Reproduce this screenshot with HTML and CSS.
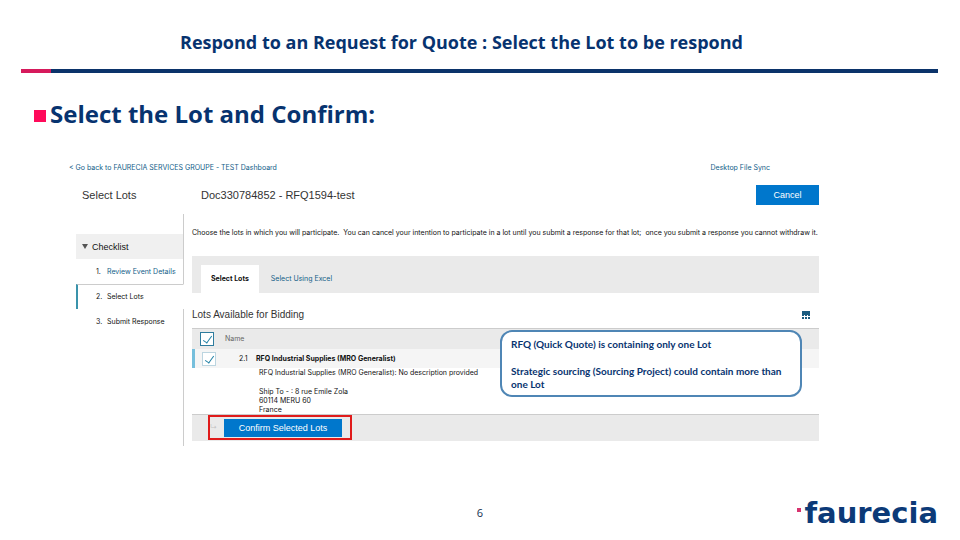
FILE: index.html
```html
<!DOCTYPE html>
<html lang="en">

<head>
  <meta charset="UTF-8">
  <meta name="viewport" content="width=device-width, initial-scale=1.0">
  <title>Respond to an Request for Quote</title>
  <link rel="stylesheet" href="styles.css">
</head>

<body>
  <header class="slide-header">
    <h1>Respond to an Request for Quote : Select the Lot to be respond</h1>
  </header>

  <main>
    <h2>Select the Lot and Confirm:</h2>

    <div class="app">
      <nav class="topbar">
        <a href="#">&lt; Go back to FAURECIA SERVICES GROUPE - TEST Dashboard</a>
        <a href="#">Desktop File Sync</a>
      </nav>

      <div class="titlebar">
        <span class="page-name">Select Lots</span>
        <span class="doc-name">Doc330784852 - RFQ1594-test</span>
        <button class="btn cancel">Cancel</button>
      </div>

      <div class="columns">
        <aside>
          <div class="side-top"></div>
          <h3 class="checklist"><span class="caret"></span>Checklist</h3>
          <ol class="steps">
            <li><span>1.</span><a href="#">Review Event Details</a></li>
            <li class="current"><span>2.</span>Select Lots</li>
            <li><span>3.</span>Submit Response</li>
          </ol>
          <div class="side-rest"></div>
        </aside>

        <section class="content">
          <p class="intro">Choose the lots in which you will participate.&nbsp; You can cancel your intention to participate in a lot until you submit a response for that lot;&nbsp; once you submit a response you cannot withdraw it.</p>

          <div class="tabs">
            <a class="active" href="#">Select Lots</a>
            <a href="#">Select Using Excel</a>
          </div>

          <div class="lots-head">
            <h3>Lots Available for Bidding</h3>
            <button class="grid-btn" aria-label="Table options">
              <svg width="8" height="8" viewBox="0 0 8 8" shape-rendering="crispEdges">
                <path fill="#1a5b80" d="M0 0h8v4h-8zM0 4h2v1h-2zM3 4h2v1h-2zM6 4h2v1h-2zM0 6h2v2h-2zM3 6h2v2h-2zM6 6h2v2h-2z" />
              </svg>
            </button>
          </div>

          <div class="lots">
            <table>
              <thead>
                <tr>
                  <th class="check"><input type="checkbox" aria-label="Select all lots" checked></th>
                  <th class="name">Name</th>
                </tr>
              </thead>
              <tbody>
                <tr class="lot">
                  <td class="check"><input type="checkbox" id="lot1" checked></td>
                  <td><label for="lot1"><span class="num">2.1</span><b>RFQ Industrial Supplies (MRO Generalist)</b></label></td>
                </tr>
                <tr class="desc">
                  <td></td>
                  <td>
                    <p>RFQ Industrial Supplies (MRO Generalist): No description provided</p>
                    <p>Ship To - : 8 rue Emile Zola<br>60114 MERU 60<br>France</p>
                  </td>
                </tr>
              </tbody>
            </table>
            <div class="actions">
              <div class="highlight">
                <span class="arrow">↳</span>
                <button class="btn">Confirm Selected Lots</button>
              </div>
            </div>
            <div class="callout">
              <p>RFQ (Quick Quote) is containing only one Lot</p>
              <p>Strategic sourcing (Sourcing Project) could contain more than one Lot</p>
            </div>
          </div>
        </section>
      </div>
    </div>
  </main>

  <footer>
    <span class="page-number">6</span>
    <div class="logo"><i></i>faurecia</div>
  </footer>
</body>

</html>
```
FILE: styles.css
```css
* {
  box-sizing: border-box;
}

body {
  display: flex;
  flex-direction: column;
  min-height: 100vh;
  margin: 0;
  background: #fff;
  color: #111;
  font-family: Inter, "Liberation Sans", sans-serif;
  font-size: 7px;
  line-height: 10px;
}

h1,
h2,
h3,
p,
ol {
  margin: 0;
  padding: 0;
}

a {
  color: #125d88;
  text-decoration: none;
}

/* slide */
.slide-header {
  margin: 0 22px 0 21px;
  padding-top: 29px;
}

.slide-header::after {
  content: "";
  display: block;
  height: 4px;
  margin-top: 14px;
  background: linear-gradient(to right, #d61a5c 30px, #0b336a 30px);
}

h1 {
  padding-right: 36px;
  color: #07336f;
  font: bold 18px/26px "Open Sans", "Noto Sans", sans-serif;
  text-align: center;
}

h2 {
  display: flex;
  align-items: center;
  gap: 4px;
  margin: 24px 0 0 34px;
  color: #07336f;
  font: bold 24px/34px "Open Sans", "Noto Sans", sans-serif;
}

h2::before {
  content: "";
  width: 12px;
  height: 12px;
  margin-top: 4px;
  background: #ff0a5a;
}

/* application */
.app {
  margin: 32px 141px 0 69px;
}

.topbar {
  display: flex;
  justify-content: space-between;
  padding-right: 49px;
}

.titlebar {
  display: flex;
  align-items: center;
  height: 20px;
  margin-top: 12px;
  padding-left: 13px;
  color: #333;
  font-family: "Liberation Sans", Arial, sans-serif;
  font-size: 11px;
}

.page-name {
  width: 119px;
}

.doc-name {
  flex: 1;
}

.btn {
  border: none;
  padding: 0;
  height: 18px;
  background: #0077cc;
  color: #fff;
  font: 9px/18px "Liberation Sans", Arial, sans-serif;
  cursor: pointer;
}

.cancel {
  width: 63px;
  height: 20px;
}

.columns {
  display: grid;
  grid-template-columns: 108px minmax(0, 1fr);
  gap: 8px;
  margin: 9px 0 0 7px;
}

aside {
  display: flex;
  flex-direction: column;
}

.side-top,
.checklist,
.side-rest,
.steps li {
  border-right: 1px solid #ccc;
}

.side-top {
  height: 20px;
}

.side-rest {
  flex: 1;
}

.checklist {
  display: flex;
  align-items: center;
  gap: 4px;
  height: 25px;
  padding-left: 6px;
  background: #f0f0f0;
  font-family: "Liberation Sans", Arial, sans-serif;
  font-size: 9px;
  font-weight: normal;
}

.caret {
  border: 3px solid transparent;
  border-top: 5px solid #555;
  border-bottom: none;
}

.steps {
  list-style: none;
}

.steps li {
  display: flex;
  align-items: center;
  height: 25px;
  padding-left: 20px;
}

.steps li span {
  width: 11px;
}

.steps .current {
  border-top: 1px solid #ccc;
  border-right-color: transparent;
  border-left: 2px solid #3a93ab;
  padding-left: 18px;
}

.content {
  padding-bottom: 5px;
}

.intro {
  padding-top: 14px;
  white-space: nowrap;
}

.tabs {
  display: flex;
  height: 37px;
  margin-top: 18px;
  padding: 9px 9px 0;
  background: #eaeaea;
  line-height: 27px;
}

.tabs a {
  padding: 0 12px;
}

.tabs .active {
  padding: 0 10px;
  background: #fff;
  color: #111;
  font-weight: bold;
}

.lots-head {
  display: flex;
  justify-content: space-between;
  align-items: center;
  height: 35px;
  padding: 8px 9px 0 0;
}

.lots-head h3 {
  color: #333;
  font-family: "Liberation Sans", Arial, sans-serif;
  font-size: 10px;
  font-weight: normal;
}

.grid-btn {
  display: flex;
  border: none;
  padding: 0;
  background: none;
  cursor: pointer;
}

.lots {
  position: relative;
}

table {
  width: 100%;
  border-spacing: 0;
  table-layout: fixed;
  text-align: left;
}

th,
td {
  padding: 0;
}

th {
  height: 21px;
  border-top: 1px solid #ccc;
  background: #eaeaea;
  color: #666;
  font-weight: normal;
}

th.check,
td.check {
  width: 33px;
  padding-left: 8px;
}

.lot td {
  height: 19px;
  background: #f5f5f5;
}

.lot .check {
  border-left: 3px solid #76bfdc;
  padding-left: 7px;
}

.lot label {
  display: flex;
  padding-left: 14px;
}

.num {
  width: 17px;
}

.desc td {
  height: 46px;
  padding: 0 0 0 34px;
  line-height: 9px;
  vertical-align: top;
}

.desc p + p {
  margin-top: 10px;
}

input[type="checkbox"] {
  appearance: none;
  display: block;
  width: 14px;
  height: 14px;
  margin: 0;
  border: 1px solid #2e7c9e;
  background: #fff;
}

.lot input[type="checkbox"] {
  border-color: #bcd5e0;
}

input[type="checkbox"]:checked::before {
  content: "";
  display: block;
  width: 4px;
  height: 8px;
  margin: 1px 0 0 4px;
  border: solid #2180a5;
  border-width: 0 1px 1px 0;
  transform: rotate(35deg);
}

.actions {
  height: 27px;
  border-top: 1px solid #ccc;
  padding-left: 16px;
  background: #eaeaea;
}

.highlight {
  display: flex;
  align-items: center;
  width: 144px;
  height: 25px;
  border: 2px solid #e01b1b;
}

.arrow {
  width: 14px;
  color: #c4c4c4;
}

.highlight .btn {
  width: 118px;
}

.callout {
  position: absolute;
  top: 2px;
  right: 17px;
  width: 302px;
  border: 2px solid #4f86b5;
  border-radius: 12px;
  padding: 6px 9px 4px;
  background: #fff;
  color: #07336f;
  font: bold 10px/13px Lato, "Open Sans", sans-serif;
}

.callout p + p {
  margin-top: 14px;
}

/* footer */
footer {
  display: grid;
  grid-template-columns: 1fr auto 1fr;
  align-items: center;
  margin-top: auto;
  padding: 0 22px 9px;
}

.page-number {
  grid-column: 2;
  color: #12304f;
  font: 11px/14px "Open Sans", sans-serif;
}

.logo {
  display: flex;
  justify-self: end;
  color: #0c3a78;
  font: bold 29px/36px "DejaVu Sans", sans-serif;
}

.logo i {
  width: 4px;
  height: 4px;
  margin: 13px 3px 0 0;
  background: #d8336f;
}
```
